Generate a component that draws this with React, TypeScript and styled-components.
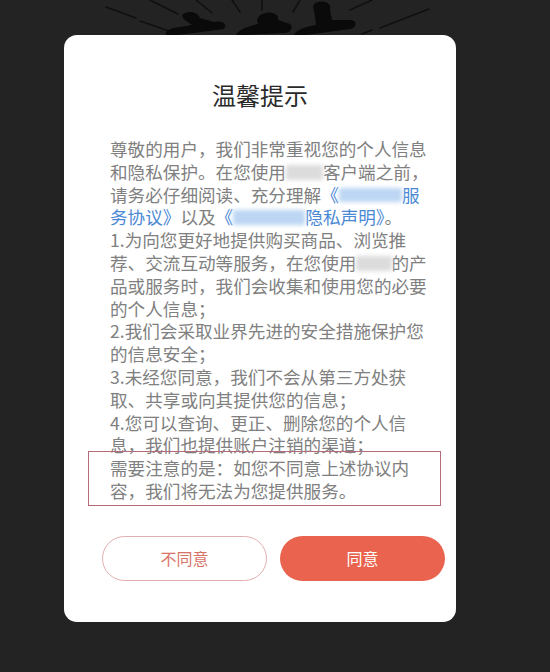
import React from 'react';
import styled, {createGlobalStyle} from "styled-components";

const GlobalStyle = createGlobalStyle`
    html, body {
        margin: 0;
        padding: 0;
        background-color: #232323;
    }
    body {
        font-family: 'Noto Sans CJK SC', 'Noto Sans', sans-serif;
        width: 550px;
        height: 672px;
        overflow: hidden;
    }
`

const Backdrop = () => (
    <Art width="550" height="35" viewBox="0 0 550 35">
        <g stroke="#101010" strokeWidth="1.6" strokeLinecap="round">
            <line x1="106" y1="7" x2="136" y2="18"/>
            <line x1="140" y1="21" x2="172" y2="32"/>
            <line x1="150" y1="0" x2="178" y2="14"/>
            <line x1="196" y1="0" x2="212" y2="13"/>
            <line x1="232" y1="0" x2="240" y2="12"/>
            <line x1="262" y1="0" x2="262" y2="10"/>
            <line x1="300" y1="0" x2="293" y2="12"/>
            <line x1="372" y1="0" x2="350" y2="10"/>
            <line x1="429" y1="9" x2="380" y2="28"/>
            <line x1="372" y1="30" x2="362" y2="34"/>
        </g>
        <g fill="#0a0a0a">
            <path d="M183 14 C190 10 198 12 200 18 L214 22 C222 20 228 24 224 29 L178 35 L166 35 C164 31 170 28 180 27 L192 25 C188 22 180 18 183 14 Z"/>
            <path d="M262 14 C270 10 280 14 278 20 L290 24 C294 28 290 33 284 33 L246 35 L236 35 C238 30 248 26 258 24 C256 20 258 16 262 14 Z"/>
            <path d="M318 2 C326 0 332 4 330 10 L332 20 L352 20 C358 22 356 28 350 29 L306 35 L294 35 C296 30 304 27 316 25 L314 10 C312 6 314 3 318 2 Z"/>
        </g>
    </Art>
)

const Blur = ({w, tone}: {w: number; tone: 'blue' | 'grey'}) => (
    <Masked $w={w} $tone={tone}/>
)

export default function App() {
    return (
        <>
            <GlobalStyle/>
            <Backdrop/>
            <Card>
                <Title>温馨提示</Title>
                <Body>
                    尊敬的用户，我们非常重视您的个人信息<br/>
                    和隐私保护。在您使用<Blur w={2.1} tone="grey"/>客户端之前，<br/>
                    请务必仔细阅读、充分理解<Link>《<Blur w={3.6} tone="blue"/>服</Link><br/>
                    <Link>务协议》</Link>以及<Link>《<Blur w={4.1} tone="blue"/>隐私声明》</Link>。<br/>
                    1.为向您更好地提供购买商品、浏览推<br/>
                    荐、交流互动等服务，在您使用<Blur w={2} tone="grey"/>的产<br/>
                    品或服务时，我们会收集和使用您的必要<br/>
                    的个人信息；<br/>
                    2.我们会采取业界先进的安全措施保护您<br/>
                    的信息安全；<br/>
                    3.未经您同意，我们不会从第三方处获<br/>
                    取、共享或向其提供您的信息；<br/>
                    4.您可以查询、更正、删除您的个人信<br/>
                    息，我们也提供账户注销的渠道；
                </Body>
                <Notice>
                    需要注意的是：如您不同意上述协议内<br/>
                    容，我们将无法为您提供服务。
                </Notice>
                <Actions>
                    <Button $primary={false}>不同意</Button>
                    <Button $primary>同意</Button>
                </Actions>
            </Card>
        </>
    );
}

const Art = styled.svg`
    display: block;
`

const Card = styled.div`
    width: 392px;
    height: 587px;
    margin-left: 64px;
    box-sizing: border-box;
    padding-top: 42px;
    background-color: #fff;
    border-radius: 13px;
`

const Title = styled.h1`
    margin: 0;
    text-align: center;
    font-size: 24px;
    line-height: 36px;
    font-weight: 400;
    color: #2a2a2a;
`

const Body = styled.p`
    margin: 25px 0 0 46px;
    font-size: 17.6px;
    line-height: 22.8px;
    color: #808080;
    white-space: nowrap;
`

const Link = styled.span`
    color: #4a88d4;
`

const Masked = styled.span<{$w: number; $tone: 'blue' | 'grey'}>`
    display: inline-block;
    width: ${p => p.$w}em;
    height: 0.85em;
    vertical-align: -0.05em;
    background-color: ${p => p.$tone === 'blue' ? '#bcd6f3' : '#dcdcdc'};
    filter: blur(2px);
`

const Notice = styled(Body)`
    position: relative;
    margin-top: 0;

    &::before {
        content: '';
        position: absolute;
        top: -6px;
        bottom: -3px;
        left: -22px;
        width: 353px;
        border: 1.5px solid #b56b79;
        box-sizing: border-box;
    }
`

const Actions = styled.div`
    display: flex;
    gap: 13px;
    padding-left: 38px;
    margin-top: 33px;
`

const Button = styled.button<{$primary: boolean}>`
    width: 165px;
    height: 45px;
    border-radius: 23px;
    font: 16px 'Noto Sans CJK SC', sans-serif;
    box-sizing: border-box;
    border: ${p => p.$primary ? 'none' : '1px solid #e2b0b0'};
    background-color: ${p => p.$primary ? '#e9634f' : '#fff'};
    color: ${p => p.$primary ? '#fff' : '#d87466'};
`
